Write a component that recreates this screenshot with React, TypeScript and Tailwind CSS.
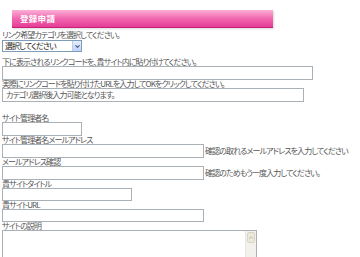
import { ChevronDown, ChevronUp } from 'lucide-react';

const font = { fontFamily: '"Noto Sans CJK JP", "DejaVu Sans", sans-serif', fontFeatureSettings: '"palt"' };

function Label({ children }: { children: React.ReactNode }) {
  return <div className="h-[8px] text-[8px] leading-[8px] tracking-[-0.9px] whitespace-nowrap text-[#555]">{children}</div>;
}

function Field({ width, note, text, h = 'h-[14px]' }: { width: string; note?: string; text?: string; h?: string }) {
  return (
    <div className={`flex items-center ${h}`}>
      <div className={`${width} ${h} border border-[#a9b0b6] bg-white text-[8px] tracking-[-0.9px] leading-[12px] pl-[3px] text-[#555] whitespace-nowrap`}>{text}</div>
      {note && <span className="ml-[1px] text-[8px] tracking-[-0.9px] text-[#555] whitespace-nowrap">{note}</span>}
    </div>
  );
}

export default function App() {
  return (
    <div className="w-[360px] h-[257px] overflow-hidden bg-white pt-[10px] pl-[2px]" style={font}>
      <div className="ml-[10px] w-[261px] h-[18px] flex items-center pl-[8px] border-b border-[#c81f78] bg-gradient-to-b from-[#fbaed6] via-[#f067b0] to-[#e63b95] shadow-[1px_1px_2px_rgba(0,0,0,0.15)]">
        <span className="text-white font-bold text-[8.5px] tracking-[0.3px]">登録申請</span>
      </div>

      <div className="mt-[3px]">
        <Label>リンク希望カテゴリを選択してください。</Label>
        <div className="flex items-center w-[80px] h-[12px] mt-[1px] border border-[#7f9db9] bg-white">
          <span className="flex-1 text-[8px] tracking-[-0.9px] leading-[10px] pl-[2px] text-[#222]">選択してください</span>
          <div className="w-[9px] h-[10px] flex items-center justify-center bg-gradient-to-b from-[#e6eefc] to-[#c1d3fb] border-l border-[#b9cbf3]">
            <ChevronDown size={7} strokeWidth={4} className="text-[#4d6185]" />
          </div>
        </div>
      </div>

      <div className="mt-[6px]">
        <Label>下に表示されるリンクコードを、貴サイト内に貼り付けてください。</Label>
        <Field width="w-[311px]" />
        <Label>実際にリンクコードを貼り付けたURLを入力してOKをクリックしてください。</Label>
        <Field width="w-[302px]" text="カテゴリ選択後入力可能となります。" />
      </div>

      <div className="mt-[12px]">
        <Label>サイト管理者名</Label>
        <Field width="w-[80px]" />
        <Label>サイト管理者名メールアドレス</Label>
        <Field width="w-[202px]" note="確認の取れるメールアドレスを入力してください" />
        <Label>メールアドレス確認</Label>
        <Field width="w-[202px]" note="確認のためもう一度入力してください。" />
        <Label>貴サイトタイトル</Label>
        <Field width="w-[130px]" h="h-[13px]" />
        <Label>貴サイトURL</Label>
        <Field width="w-[202px]" h="h-[13px]" />
        <Label>サイトの説明</Label>
        <div className="flex w-[255px] h-[40px] border border-[#a9b0b6] bg-white">
          <div className="flex-1" />
          <div className="w-[11px] bg-[#f2f1ec] border-l border-[#e8e6df]">
            <div className="h-[11px] m-[1px] rounded-[2px] border border-[#d6d4cc] bg-[#ece9d8] flex items-center justify-center">
              <ChevronUp size={7} strokeWidth={3} className="text-[#a8a8a8]" />
            </div>
          </div>
        </div>
      </div>
    </div>
  );
}
